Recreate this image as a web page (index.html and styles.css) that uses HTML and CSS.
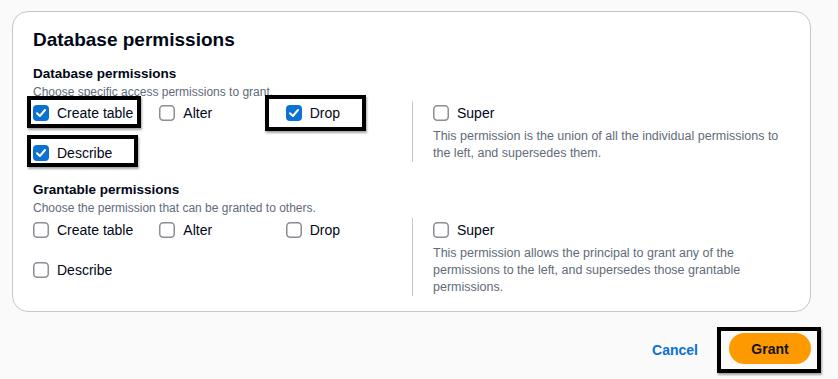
FILE: index.html
```html
<!DOCTYPE html>
<html lang="en">
<head>
    <meta charset="UTF-8">
    <meta name="viewport" content="width=device-width, initial-scale=1.0">
    <title>Database permissions</title>
    <link rel="stylesheet" href="styles.css">
</head>
<body>
    <div class="page">
        <div class="card">
            <h2 class="card-title">Database permissions</h2>

            <div class="section">
                <h3 class="label">Database permissions</h3>
                <p class="hint">Choose specific access permissions to grant.</p>
                <div class="perm-row">
                    <div class="options">
                        <label class="option mark-create">
                            <svg class="box" viewBox="0 0 16 16"><rect class="on" x="0" y="0" width="16" height="16" rx="4"/><path class="tick" d="M4 8.3 L6.9 11 L12 5"/></svg>
                            Create table
                        </label>
                        <label class="option">
                            <svg class="box" viewBox="0 0 16 16"><rect class="off" x="0.75" y="0.75" width="14.5" height="14.5" rx="3.5"/></svg>
                            Alter
                        </label>
                        <label class="option mark-drop">
                            <svg class="box" viewBox="0 0 16 16"><rect class="on" x="0" y="0" width="16" height="16" rx="4"/><path class="tick" d="M4 8.3 L6.9 11 L12 5"/></svg>
                            Drop
                        </label>
                        <label class="option mark-describe">
                            <svg class="box" viewBox="0 0 16 16"><rect class="on" x="0" y="0" width="16" height="16" rx="4"/><path class="tick" d="M4 8.3 L6.9 11 L12 5"/></svg>
                            Describe
                        </label>
                    </div>
                    <div class="super">
                        <label class="option">
                            <svg class="box" viewBox="0 0 16 16"><rect class="off" x="0.75" y="0.75" width="14.5" height="14.5" rx="3.5"/></svg>
                            Super
                        </label>
                        <p class="super-text">This permission is the union of all the individual permissions to the left, and supersedes them.</p>
                    </div>
                </div>
            </div>

            <div class="section section-grantable">
                <h3 class="label">Grantable permissions</h3>
                <p class="hint">Choose the permission that can be granted to others.</p>
                <div class="perm-row">
                    <div class="options">
                        <label class="option">
                            <svg class="box" viewBox="0 0 16 16"><rect class="off" x="0.75" y="0.75" width="14.5" height="14.5" rx="3.5"/></svg>
                            Create table
                        </label>
                        <label class="option">
                            <svg class="box" viewBox="0 0 16 16"><rect class="off" x="0.75" y="0.75" width="14.5" height="14.5" rx="3.5"/></svg>
                            Alter
                        </label>
                        <label class="option">
                            <svg class="box" viewBox="0 0 16 16"><rect class="off" x="0.75" y="0.75" width="14.5" height="14.5" rx="3.5"/></svg>
                            Drop
                        </label>
                        <label class="option">
                            <svg class="box" viewBox="0 0 16 16"><rect class="off" x="0.75" y="0.75" width="14.5" height="14.5" rx="3.5"/></svg>
                            Describe
                        </label>
                    </div>
                    <div class="super">
                        <label class="option">
                            <svg class="box" viewBox="0 0 16 16"><rect class="off" x="0.75" y="0.75" width="14.5" height="14.5" rx="3.5"/></svg>
                            Super
                        </label>
                        <p class="super-text">This permission allows the principal to grant any of the permissions to the left, and supersedes those grantable permissions.</p>
                    </div>
                </div>
            </div>
        </div>

        <div class="footer">
            <a class="cancel" href="#">Cancel</a>
            <div class="grant-wrap mark-grant">
                <button class="grant">Grant</button>
            </div>
        </div>
    </div>
</body>
</html>
```

FILE: styles.css
```css
body {
    margin: 0;
    padding: 0;
    font-family: "Liberation Sans", Arial, sans-serif;
    background-color: #fafafa;
    color: #000716;
}
.page {
    padding: 11px 27px 15px 12px;
    min-height: 100vh;
    box-sizing: border-box;
}
.card {
    background-color: #ffffff;
    border: 1px solid #c6c6cd;
    border-radius: 16px;
    padding: 16px 20px 15px 20px;
}
.card-title {
    margin: 0;
    font-size: 19px;
    line-height: 24px;
    font-weight: bold;
}
.section {
    margin-top: 14px;
}
.section-grantable {
    margin-top: 17px;
}
.label {
    margin: 0;
    font-size: 13.5px;
    line-height: 16px;
    font-weight: bold;
}
.hint {
    margin: 2px 0 0 0;
    font-size: 12px;
    line-height: 16px;
    color: #5f6b7a;
}
.perm-row {
    display: flex;
    align-items: flex-start;
    margin-top: 1px;
}
.section-grantable .perm-row {
    margin-top: 2px;
}
.options {
    width: 379px;
    display: grid;
    grid-template-columns: repeat(3, 1fr);
    row-gap: 16px;
}
.option {
    position: relative;
    display: flex;
    align-items: center;
    gap: 8px;
    height: 24px;
    font-size: 14px;
    width: fit-content;
}
.box {
    width: 16px;
    height: 16px;
    flex: none;
}
.box .on {
    fill: #0972d3;
}
.box .off {
    fill: #ffffff;
    stroke: #8c8c94;
    stroke-width: 1.5;
}
.box .tick {
    fill: none;
    stroke: #ffffff;
    stroke-width: 2;
    stroke-linecap: round;
    stroke-linejoin: round;
}
.super {
    border-left: 1px solid #c6c6cd;
    padding-left: 20px;
    max-width: 355px;
}
.super-text {
    margin: 3px 0 0 0;
    font-size: 12.5px;
    line-height: 17px;
    color: #5f6b7a;
}

/* black highlight boxes drawn over the screenshot */
.mark-create::after,
.mark-drop::after,
.mark-describe::after,
.mark-grant::after {
    content: "";
    position: absolute;
    box-sizing: border-box;
    border: 4px solid #000000;
    box-shadow: 1px 2px 2px rgba(0, 0, 0, 0.35);
    pointer-events: none;
}
.mark-create::after {
    left: -6px;
    top: -5px;
    width: 114px;
    height: 32px;
}
.mark-describe::after {
    left: -6px;
    top: -6px;
    width: 111px;
    height: 32px;
}
.mark-drop::after {
    left: -21px;
    top: -6px;
    width: 101px;
    height: 36px;
}

.footer {
    display: flex;
    justify-content: flex-end;
    align-items: center;
    gap: 31px;
    margin-top: 21px;
}
.cancel {
    color: #0972d3;
    font-size: 14px;
    font-weight: bold;
    text-decoration: none;
    margin-top: 2px;
}
.grant-wrap {
    position: relative;
    display: flex;
}
.grant {
    font-family: inherit;
    font-size: 14px;
    font-weight: bold;
    color: #0f141a;
    background-color: #ff9900;
    border: none;
    border-radius: 16px;
    height: 31px;
    width: 82px;
    padding: 0;
}
.mark-grant::after {
    left: -12px;
    top: -6px;
    width: 104px;
    height: 46px;
}
```
